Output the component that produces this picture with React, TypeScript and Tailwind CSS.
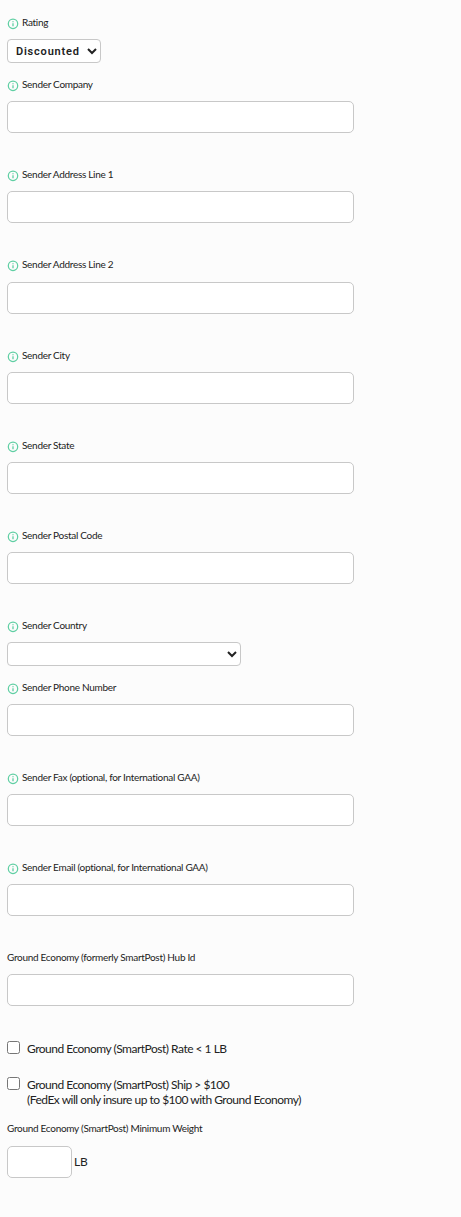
import { useState } from "react";

type LabelProps = {
  text: string;
  info?: boolean;
};

function InfoIcon() {
  return (
    <svg viewBox="0 0 12 12" className="mt-[3px] h-3 w-3 shrink-0" fill="none">
      <circle cx="6" cy="5.8" r="4.7" stroke="#5fcfa3" strokeWidth="1.25" />
      <path d="M6 5.2V8.2M6 3.3V4.3" stroke="#5fcfa3" strokeWidth="1.3" />
    </svg>
  );
}

function Label({ text, info = true }: LabelProps) {
  return (
    <div className="flex h-4 items-start whitespace-nowrap text-[10px] leading-[14px] tracking-[-0.29px]">
      {info && (
        <span className="mr-[3px] flex">
          <InfoIcon />
        </span>
      )}
      <span>{text}</span>
    </div>
  );
}

function TextField({ text, info = true }: LabelProps) {
  return (
    <div className="h-[90.2px]">
      <Label text={text} info={info} />
      <input
        type="text"
        aria-label={text}
        className="mt-[8.2px] block h-8 w-[347px] rounded-[5px] border border-[#c8c8c8] bg-white px-2"
      />
    </div>
  );
}

export default function App() {
  const [rating, setRating] = useState("Discounted");

  return (
    <div className="min-h-[1217px] bg-[#fcfcfc] pl-[7px] pt-[15px] font-['Lato',sans-serif] text-[#222]">
      {/* RATING */}
      <div className="h-[62.05px]">
        <Label text="Rating" />
        <select
          value={rating}
          onChange={(e) => setRating(e.target.value)}
          className="mt-2 block h-6 w-[94px] rounded-[4px] border border-[#c8c8c8] bg-white pl-1 font-['Roboto',sans-serif] text-[11px] font-semibold tracking-[0.8px]"
        >
          <option>Discounted</option>
          <option>List</option>
        </select>
      </div>

      {/* SENDER */}
      <TextField text="Sender Company" />
      <TextField text="Sender Address Line 1" />
      <TextField text="Sender Address Line 2" />
      <TextField text="Sender City" />
      <TextField text="Sender State" />
      <TextField text="Sender Postal Code" />
      <div className="h-[61.4px]">
        <Label text="Sender Country" />
        <select
          aria-label="Sender Country"
          className="mt-2 block h-6 w-[234px] rounded-[4px] border border-[#c8c8c8] bg-white text-[11px]"
        />
      </div>
      <TextField text="Sender Phone Number" />
      <TextField text="Sender Fax (optional, for International GAA)" />
      <TextField text="Sender Email (optional, for International GAA)" />

      {/* GROUND ECONOMY */}
      <TextField text="Ground Economy (formerly SmartPost) Hub Id" info={false} />
      <label className="-mt-[0.4px] flex h-9 items-start text-xs leading-[15px] tracking-[-0.5px]">
        <input type="checkbox" className="mr-[7px] mt-[1px] h-[13px] w-[13px]" />
        <span className="mt-[1px]">Ground Economy (SmartPost) Rate &lt; 1 LB</span>
      </label>
      <label className="flex h-[45px] items-start text-xs leading-[15px] tracking-[-0.5px]">
        <input type="checkbox" className="mr-[7px] mt-[1px] h-[13px] w-[13px]" />
        <span className="mt-[1px]">
          Ground Economy (SmartPost) Ship &gt; $100
          <br />
          (FedEx will only insure up to $100 with Ground Economy)
        </span>
      </label>
      <Label text="Ground Economy (SmartPost) Minimum Weight" info={false} />
      <div className="mt-[9px] flex items-center text-xs tracking-[-0.2px]">
        <input
          type="text"
          aria-label="Minimum weight"
          className="mr-[2px] h-8 w-[65px] rounded-[5px] border border-[#c8c8c8] bg-white px-2"
        />
        LB
      </div>
    </div>
  );
}
